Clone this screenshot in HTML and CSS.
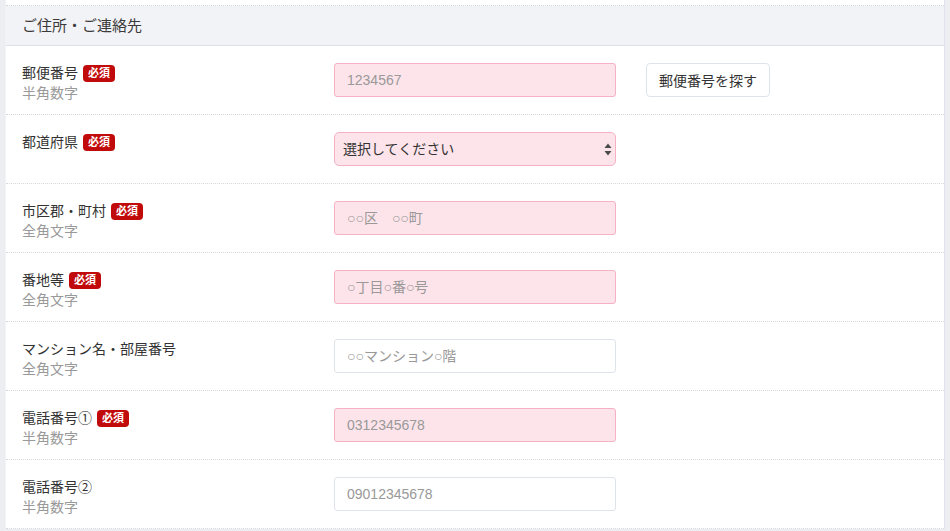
FILE: index.html
```html
<!DOCTYPE html>
<html lang="ja">
<head>
<meta charset="UTF-8" />
<meta name="viewport" content="width=device-width, initial-scale=1" />
<title>ご住所・ご連絡先</title>
<link rel="stylesheet" href="styles.css">
</head>
<body>
  <div class="form-panel">
    <div class="prev-row"></div>
    <div class="section-head">ご住所・ご連絡先</div>

    <div class="form-row">
      <div class="field-label">
        <div class="label-main">郵便番号<span class="required">必須</span></div>
        <div class="label-note">半角数字</div>
      </div>
      <input type="text" class="field-input is-required" placeholder="1234567">
      <button type="button" class="btn-search">郵便番号を探す</button>
    </div>

    <div class="form-row">
      <div class="field-label">
        <div class="label-main">都道府県<span class="required">必須</span></div>
      </div>
      <div class="select-wrap">
        <select class="field-input field-select is-required">
          <option>選択してください</option>
        </select>
        <svg class="select-arrows" width="8" height="13" viewBox="0 0 8 13">
          <path d="M4 0.5 L7.5 5 L0.5 5 Z" fill="#4a4a4a"/>
          <path d="M4 12.5 L7.5 8 L0.5 8 Z" fill="#4a4a4a"/>
        </svg>
      </div>
    </div>

    <div class="form-row">
      <div class="field-label">
        <div class="label-main">市区郡・町村<span class="required">必須</span></div>
        <div class="label-note">全角文字</div>
      </div>
      <input type="text" class="field-input is-required" placeholder="○○区　○○町">
    </div>

    <div class="form-row">
      <div class="field-label">
        <div class="label-main">番地等<span class="required">必須</span></div>
        <div class="label-note">全角文字</div>
      </div>
      <input type="text" class="field-input is-required" placeholder="○丁目○番○号">
    </div>

    <div class="form-row">
      <div class="field-label">
        <div class="label-main">マンション名・部屋番号</div>
        <div class="label-note">全角文字</div>
      </div>
      <input type="text" class="field-input" placeholder="○○マンション○階">
    </div>

    <div class="form-row">
      <div class="field-label">
        <div class="label-main">電話番号①<span class="required">必須</span></div>
        <div class="label-note">半角数字</div>
      </div>
      <input type="text" class="field-input is-required" placeholder="0312345678">
    </div>

    <div class="form-row">
      <div class="field-label">
        <div class="label-main">電話番号②</div>
        <div class="label-note">半角数字</div>
      </div>
      <input type="text" class="field-input" placeholder="09012345678">
    </div>
  </div>
</body>
</html>
```

FILE: styles.css
```css
:root {
  --page-bg: #eceef1;
  --panel-border: #dfe4ec;
  --head-bg: #f2f3f6;
  --row-line: #d5d8dd;
  --text: #333333;
  --muted: #999999;
  --req-bg: #fde4ea;
  --req-border: #f6b2c4;
  --input-border: #dfe4ea;
  --badge: #c10a0a;
  --font: "Liberation Sans", "Noto Sans CJK JP", sans-serif;
}

* {
  box-sizing: border-box;
}

body {
  margin: 0;
  background-color: var(--page-bg);
  color: var(--text);
  font-family: var(--font);
}

.form-panel {
  margin: 0 5px;
  background: #ffffff;
  border-left: 1px solid #f0f2f5;
  border-right: 1px solid var(--panel-border);
}

.prev-row {
  height: 6px;
  border-bottom: 1px dotted var(--row-line);
}

.section-head {
  height: 40px;
  padding-left: 16px;
  background-color: var(--head-bg);
  border-bottom: 1px solid #dde1e8;
  font-size: 15px;
  line-height: 39px;
  color: #3a3a3a;
}

.form-row {
  display: flex;
  align-items: flex-start;
  padding: 17px 0 17px 16px;
  border-bottom: 1px dotted var(--row-line);
}

.field-label {
  width: 312px;
  height: 34px;
  flex-shrink: 0;
  font-size: 14px;
  line-height: 20px;
}

.label-main {
  display: flex;
  align-items: center;
  height: 20px;
}

.label-note {
  color: var(--muted);
}

.required {
  display: inline-block;
  margin-left: 5px;
  padding: 0 5px;
  height: 17px;
  border-radius: 4px;
  background-color: var(--badge);
  color: #ffffff;
  font-size: 11px;
  font-weight: bold;
  line-height: 17px;
}

.field-input {
  width: 282px;
  height: 34px;
  padding: 0 12px;
  border: 1px solid var(--input-border);
  border-radius: 3px;
  background-color: #ffffff;
  font-family: var(--font);
  font-size: 14px;
  color: var(--text);
  outline: none;
}

.field-input::placeholder {
  color: var(--muted);
}

.field-input.is-required {
  background-color: var(--req-bg);
  border-color: var(--req-border);
}

.select-wrap {
  position: relative;
  width: 282px;
}

.field-select {
  appearance: none;
  -webkit-appearance: none;
  padding: 0 8px;
  border-radius: 5px;
}

.select-arrows {
  position: absolute;
  right: 4px;
  top: 11px;
  pointer-events: none;
}

.btn-search {
  margin-left: 30px;
  height: 34px;
  padding: 0 12px;
  background-color: #ffffff;
  border: 1px solid var(--input-border);
  border-radius: 4px;
  font-family: var(--font);
  font-size: 14px;
  color: var(--text);
  cursor: pointer;
}
```
